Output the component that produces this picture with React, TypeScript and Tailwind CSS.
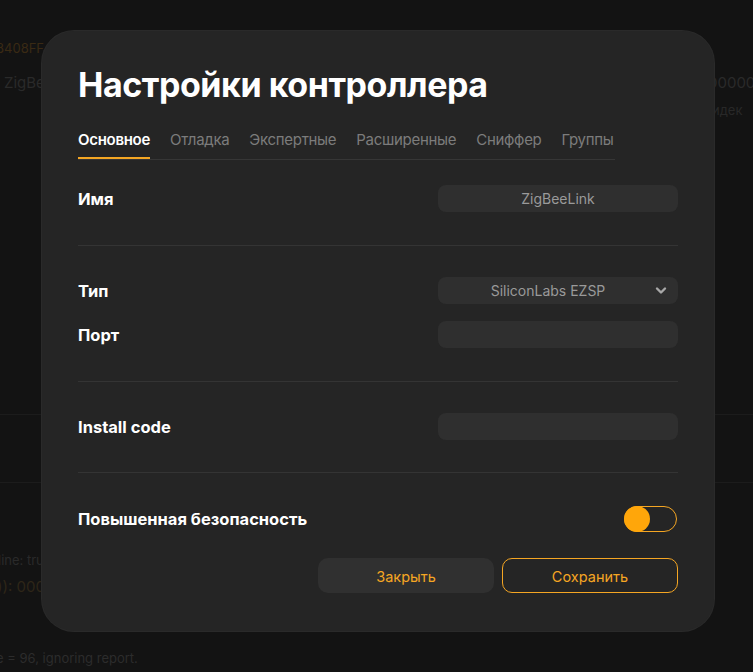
import React from "react";

const font = { fontFamily: "Inter, 'Noto Sans', sans-serif" };

function Field({ value, select }: { value?: string; select?: boolean }) {
  return (
    <div
      className={
        select
          ? "relative flex h-[27px] w-[240px] items-center justify-center rounded-[8px] bg-[#2f2f2f] pr-[20px] text-[14px] text-[#9a9a9a]"
          : "relative flex h-[27px] w-[240px] items-center justify-center rounded-[8px] bg-[#2f2f2f] text-[14px] text-[#9a9a9a]"
      }
    >
      {value}
      {select && (
        <svg className="absolute right-[11px] top-[9px]" width="12" height="9" viewBox="0 0 12 9">
          <path d="M2 2.5 L6 6.5 L10 2.5" stroke="#a8a8a8" strokeWidth="2.4" fill="none" strokeLinecap="round" strokeLinejoin="round" />
        </svg>
      )}
    </div>
  );
}

function Row({ label, children }: { label: string; children: React.ReactNode }) {
  return (
    <div className="flex h-[27px] items-center justify-between">
      <span className="pt-[2px] text-[16.5px] font-bold text-white">{label}</span>
      {children}
    </div>
  );
}

export default function App() {
  const tabs = ["Основное", "Отладка", "Экспертные", "Расширенные", "Сниффер", "Группы"];
  return (
    <div className="relative h-[672px] w-[753px] overflow-hidden bg-[#131313]" style={font}>
      {/* background page (dimmed) */}
      <div className="absolute inset-0 text-[13px]">
        <div className="absolute left-[-4px] top-[39px] text-[#3a2a14]">8408FF</div>
        <div className="absolute left-[4px] top-[72px] text-[15px] text-[#2a2a2a]">ZigBee</div>
        <div className="absolute left-[708px] top-[72px] text-[15px] text-[#2a2a2a]">00000</div>
        <div className="absolute left-[712px] top-[101px] text-[#282828]">идек</div>
        <div className="absolute left-0 right-0 top-[414px] h-px bg-[#1c1c1c]" />
        <div className="absolute left-0 right-0 top-[482px] h-px bg-[#1c1c1c]" />
        <div className="absolute left-[-2px] top-[551px] text-[#2a2a2a]">line: true</div>
        <div className="absolute left-[-3px] top-[576px] text-[15px] text-[#2e2618]">)): 00000</div>
        <div className="absolute left-[-4px] top-[649px] text-[#2c2c2c]">e = 96, ignoring report.</div>
      </div>

      {/* dialog */}
      <div className="absolute left-[42px] top-[31px] flex h-[600px] w-[672px] flex-col rounded-[32px] bg-[#252525] px-[36px] shadow-[0_0_0_1px_#2a2a2a]">
        <h1 className="mt-[34px] h-[40px] text-[34px] font-bold leading-[40px] tracking-[-0.45px] text-white">
          Настройки контроллера
        </h1>
        <div className="mt-[14px] flex w-[537px] gap-[20px] border-b border-[#363636]">
          {tabs.map((t, i) => (
            <div
              key={t}
              className={
                i === 0
                  ? "h-[40px] border-b-2 border-[#f5a623] pt-[10px] text-[15px] font-semibold tracking-[-0.3px] text-white"
                  : "h-[40px] pt-[10px] text-[15px] tracking-[-0.3px] text-[#7c7c7c]"
              }
            >
              {t}
            </div>
          ))}
        </div>

        <div className="flex flex-col pb-[33px] pt-[25px]">
          <Row label="Имя">
            <Field value="ZigBeeLink" />
          </Row>
        </div>
        <div className="h-px bg-[#343434]" />
        <div className="flex flex-col gap-[17px] pb-[33px] pt-[31px]">
          <Row label="Тип">
            <Field value="SiliconLabs EZSP" select />
          </Row>
          <Row label="Порт">
            <Field />
          </Row>
        </div>
        <div className="h-px bg-[#343434]" />
        <div className="flex flex-col pb-[32px] pt-[31px]">
          <Row label="Install code">
            <Field />
          </Row>
        </div>
        <div className="h-px bg-[#343434]" />
        <div className="flex flex-col pt-[32px]">
          <div className="flex h-[27px] items-center justify-between">
            <span className="pt-[2px] text-[16.5px] font-bold text-white">Повышенная безопасность</span>
            <div className="mr-[1px] flex h-[26px] w-[53px] items-center rounded-full border-[1.5px] border-[#f5a623]">
              <div className="ml-[-1px] h-[26px] w-[26px] rounded-full bg-[#ffa60a]" />
            </div>
          </div>
        </div>
        <div className="mt-[26px] flex justify-end gap-[8px]">
          <button className="h-[35px] w-[176px] rounded-[10px] bg-[#303030] pt-[2px] text-[14.5px] text-[#f5a623]">
            Закрыть
          </button>
          <button className="h-[35px] w-[176px] rounded-[10px] border border-[#f5a623] pt-[2px] text-[14.5px] text-[#f5a623]">
            Сохранить
          </button>
        </div>
      </div>
    </div>
  );
}
